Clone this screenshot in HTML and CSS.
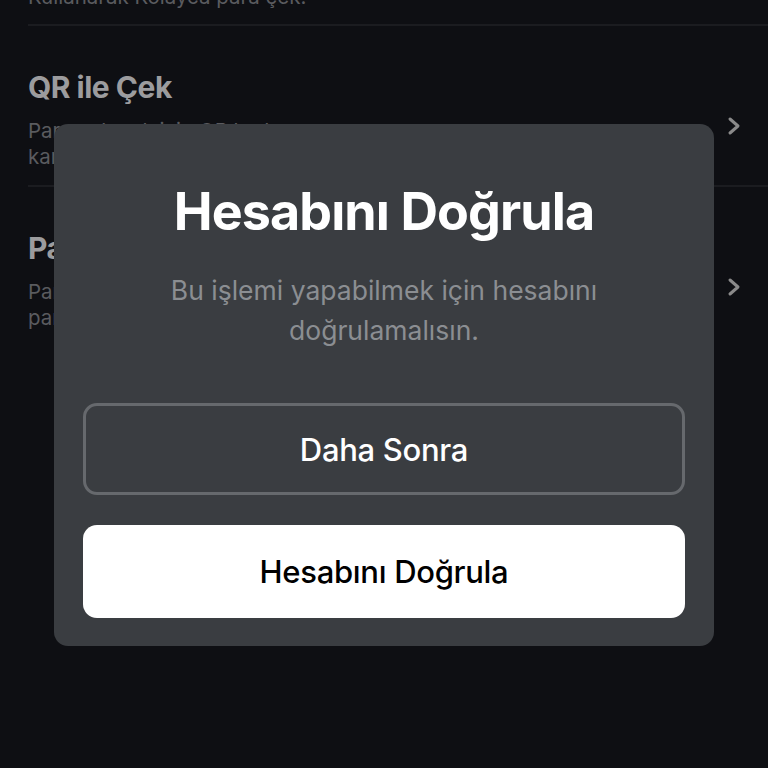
FILE: index.html
```html
<!DOCTYPE html>
<html lang="tr">
<head>
<meta charset="utf-8">
<link rel="stylesheet" href="styles.css">
</head>
<body>
<div class="screen">
  <div class="list">
    <div class="item first">
      <p class="desc">Kullanarak Kolayca para çek.</p>
    </div>
    <div class="item">
      <div class="text">
        <h3 class="title">QR ile Çek</h3>
        <p class="desc">Para çekmek için QR kodu<br>kameranla okut.</p>
      </div>
      <svg class="chev" width="16" height="24" viewBox="0 0 16 24"><path d="M4 5 L12 12 L4 19" fill="none" stroke="#8a8a8a" stroke-width="3" stroke-linecap="round" stroke-linejoin="round"/></svg>
    </div>
    <div class="item last">
      <div class="text">
        <h3 class="title">Para Gönder</h3>
        <p class="desc">Para göndermek için<br>para transferi yap.</p>
      </div>
      <svg class="chev" width="16" height="24" viewBox="0 0 16 24"><path d="M4 5 L12 12 L4 19" fill="none" stroke="#8a8a8a" stroke-width="3" stroke-linecap="round" stroke-linejoin="round"/></svg>
    </div>
  </div>
  <div class="modal">
    <h1 class="m-title">Hesabını Doğrula</h1>
    <p class="m-sub">Bu işlemi yapabilmek için hesabını<br>doğrulamalısın.</p>
    <button class="btn btn-outline">Daha Sonra</button>
    <button class="btn btn-solid">Hesabını Doğrula</button>
  </div>
</div>
</body>
</html>
```
FILE: styles.css
```css
* { box-sizing: border-box; }
html, body { margin: 0; padding: 0; background: #0e0f13; }
body { font-family: Inter, "Noto Sans", sans-serif; }
.screen { position: relative; width: 768px; height: 768px; overflow: hidden; background: #0e0f13; }
.list { padding-left: 28px; margin-top: -16px; }
.item { display: flex; align-items: flex-start; border-bottom: 2px solid #1b1c20; padding: 43px 0 15px; }
.item.first { padding: 0 0 14px; }
.item.last { border-bottom: none; }
.text { flex: 1; }
.title { margin: 0 0 13px; color: #9c9c9e; font-size: 30px; font-weight: 700; letter-spacing: -0.5px; line-height: 36px; }
.desc { margin: 0; color: #5a5b5f; font-size: 20.5px; line-height: 26px; white-space: nowrap; }
.chev { margin: 45px 26px 0 0; }
.modal { position: absolute; left: 54px; top: 124px; width: 660px; height: 522px; background: #3a3d41; border-radius: 14px; padding: 58px 29px 28px; display: flex; flex-direction: column; align-items: center; }
.m-title { margin: 0; color: #fff; font-size: 52px; font-weight: 700; letter-spacing: -0.9px; line-height: 60px; }
.m-sub { margin: 28px 0 0; color: #8b8e92; font-size: 26.5px; line-height: 40px; text-align: center; }
.btn { width: 602px; height: 92px; border-radius: 14px; font-family: inherit; font-size: 31px; font-weight: 500; letter-spacing: -0.3px; }
.btn-outline { margin-top: 53px; background: transparent; border: 3px solid #66696d; color: #fff; }
.btn-solid { margin-top: 30px; height: 93px; background: #fff; border: none; color: #000; }
```
